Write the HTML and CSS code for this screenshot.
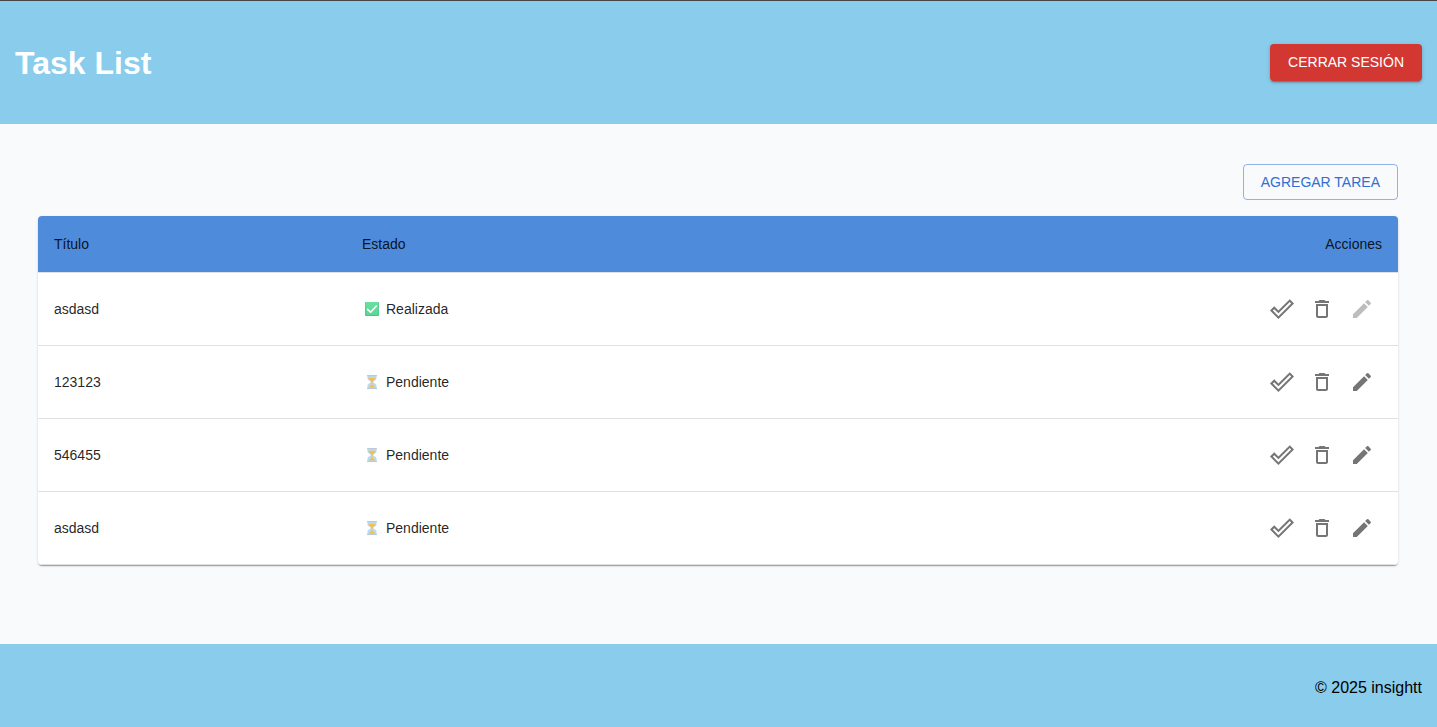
FILE: index.html
```html
<!DOCTYPE html>
<html lang="es">
<head>
  <meta charset="utf-8">
  <meta name="viewport" content="width=device-width, initial-scale=1">
  <title>Task List</title>
  <link rel="stylesheet" href="styles.css">
</head>
<body>
  <svg class="sprite" aria-hidden="true">
    <defs>
      <linearGradient id="green" x1="0" y1="0" x2="0" y2="1"><stop offset="0" stop-color="#6be0a0"/><stop offset="1" stop-color="#5bd695"/></linearGradient>
    </defs>
    <symbol id="done" viewBox="0 0 24 24"><path d="m19.77 5.03 1.4 1.4L8.43 19.17l-5.6-5.6 1.4-1.4 4.2 4.2L19.77 5.03m0-2.83L8.43 13.54l-4.2-4.2L0 13.57 8.43 22 24 6.43 19.77 2.2z"/></symbol>
    <symbol id="trash" viewBox="0 0 24 24"><path d="M16 9v10H8V9h8m-1.5-6h-5l-1 1H5v2h14V4h-3.5l-1-1zM18 7H6v12c0 1.1.9 2 2 2h8c1.1 0 2-.9 2-2V7z"/></symbol>
    <symbol id="edit" viewBox="0 0 24 24"><path d="M3 17.25V21h3.75L17.81 9.94l-3.75-3.75L3 17.25zM20.71 7.04c.39-.39.39-1.02 0-1.41l-2.34-2.34a.9959.9959 0 0 0-1.41 0l-1.83 1.83 3.75 3.75 1.83-1.83z"/></symbol>
    <symbol id="checked" viewBox="0 0 14 14"><rect width="14" height="14" rx="1" fill="#48c483"/><rect width="13" height="13" x=".5" rx="1" fill="url(#green)"/><path d="M2.6 7.3 5.6 10.2 11.4 4" fill="none" stroke="#fff" stroke-width="1.6" stroke-linecap="round" stroke-linejoin="round"/></symbol>
    <symbol id="hourglass" viewBox="0 0 14 14">
      <path d="M2.500 1h9v2.500C11.500 5.300 8.300 6 8.300 7s3.200 1.700 3.200 3.500V13h-9v-2.500C2.500 8.700 5.700 8 5.700 7S2.500 5.300 2.500 3.500z" fill="#b9dcf6"/>
      <path d="M3.300 2.800h7.400C10.500 4.800 7.800 5.600 7.500 7v2.800l3 2.700h-7l3-2.700V7C6.200 5.600 3.500 4.800 3.300 2.800z" fill="#f7bd52"/>
      <path d="M2 0h10v1.300H2zM2 12.700h10V14H2z" fill="#bccad8"/>
    </symbol>
  </svg>

  <header class="header">
    <h1 class="title">Task List</h1>
    <button class="button button-danger" type="button">CERRAR SESIÓN</button>
  </header>

  <main class="main">
    <div class="toolbar">
      <button class="button button-outlined" type="button">AGREGAR TAREA</button>
    </div>
    <div class="card">
      <table class="tasks">
        <thead>
          <tr><th class="col-title" scope="col">Título</th><th scope="col">Estado</th><th class="col-actions" scope="col">Acciones</th></tr>
        </thead>
        <tbody>
          <tr>
            <td>asdasd</td>
            <td><span class="status"><svg class="status-icon" aria-hidden="true"><use href="#checked"/></svg>Realizada</span></td>
            <td><div class="actions">
              <button class="icon-button" type="button" aria-label="Completar"><svg class="icon"><use href="#done"/></svg></button>
              <button class="icon-button" type="button" aria-label="Eliminar"><svg class="icon"><use href="#trash"/></svg></button>
              <button class="icon-button" type="button" aria-label="Editar" disabled><svg class="icon"><use href="#edit"/></svg></button>
            </div></td>
          </tr>
          <tr>
            <td>123123</td>
            <td><span class="status"><svg class="status-icon" aria-hidden="true"><use href="#hourglass"/></svg>Pendiente</span></td>
            <td><div class="actions">
              <button class="icon-button" type="button" aria-label="Completar"><svg class="icon"><use href="#done"/></svg></button>
              <button class="icon-button" type="button" aria-label="Eliminar"><svg class="icon"><use href="#trash"/></svg></button>
              <button class="icon-button" type="button" aria-label="Editar"><svg class="icon"><use href="#edit"/></svg></button>
            </div></td>
          </tr>
          <tr>
            <td>546455</td>
            <td><span class="status"><svg class="status-icon" aria-hidden="true"><use href="#hourglass"/></svg>Pendiente</span></td>
            <td><div class="actions">
              <button class="icon-button" type="button" aria-label="Completar"><svg class="icon"><use href="#done"/></svg></button>
              <button class="icon-button" type="button" aria-label="Eliminar"><svg class="icon"><use href="#trash"/></svg></button>
              <button class="icon-button" type="button" aria-label="Editar"><svg class="icon"><use href="#edit"/></svg></button>
            </div></td>
          </tr>
          <tr>
            <td>asdasd</td>
            <td><span class="status"><svg class="status-icon" aria-hidden="true"><use href="#hourglass"/></svg>Pendiente</span></td>
            <td><div class="actions">
              <button class="icon-button" type="button" aria-label="Completar"><svg class="icon"><use href="#done"/></svg></button>
              <button class="icon-button" type="button" aria-label="Eliminar"><svg class="icon"><use href="#trash"/></svg></button>
              <button class="icon-button" type="button" aria-label="Editar"><svg class="icon"><use href="#edit"/></svg></button>
            </div></td>
          </tr>
        </tbody>
      </table>
    </div>
  </main>

  <footer class="footer"><p class="copyright">© 2025 insightt</p></footer>
</body>
</html>
```

FILE: styles.css
```css
* {
  box-sizing: border-box;
}

body {
  display: flex;
  flex-direction: column;
  min-height: 100vh;
  margin: 0;
  background: #f8fafc;
  color: #000;
  font-family: "Liberation Sans", Arial, sans-serif;
  font-size: 16px;
}

.sprite {
  position: absolute;
  width: 0;
  height: 0;
}

.header {
  display: flex;
  align-items: center;
  justify-content: space-between;
  padding: 43px 15px;
  border-top: 1px solid #474747;
  background: #8acceb;
}

.title {
  margin: 0;
  color: #fff;
  font-size: 32px;
  line-height: 36px;
}

.button {
  border: 1px solid transparent;
  border-radius: 4px;
  font-family: inherit;
  font-size: 14px;
  cursor: pointer;
}

.button-danger {
  padding: 5px 17px 6px;
  background: #d33732;
  color: #fff;
  line-height: 24px;
  box-shadow: 0 3px 1px -2px rgba(0, 0, 0, 0.2), 0 2px 2px rgba(0, 0, 0, 0.14), 0 1px 5px rgba(0, 0, 0, 0.12);
}

.button-outlined {
  padding: 5px 17px;
  border-color: #90b3e4;
  background: transparent;
  color: #326fd1;
  line-height: 24px;
}

.main {
  flex: 1;
  padding: 40px 39px 40px 38px;
}

.toolbar {
  display: flex;
  justify-content: flex-end;
  margin-bottom: 16px;
}

.card {
  overflow: hidden;
  border-radius: 4px;
  background: #fff;
  box-shadow: 0 2px 1px -1px rgba(0, 0, 0, 0.2), 0 1px 1px rgba(0, 0, 0, 0.14), 0 1px 3px rgba(0, 0, 0, 0.12);
}

.tasks {
  width: 100%;
  border-spacing: 0;
  color: rgba(0, 0, 0, 0.87);
  font-size: 14px;
  line-height: 24px;
}

.tasks th,
.tasks td {
  padding: 16px;
  border-bottom: 1px solid #e0e0e0;
  font-weight: 400;
  text-align: left;
}

.tasks th {
  background: #4e8cdb;
}

.tasks .col-title {
  width: 308px;
}

.tasks .col-actions {
  text-align: right;
}

.status {
  display: flex;
  align-items: center;
  gap: 7px;
  padding-left: 3px;
}

.status-icon {
  width: 14px;
  height: 14px;
}

.actions {
  display: flex;
  justify-content: flex-end;
}

.icon-button {
  display: flex;
  padding: 8px;
  border: 0;
  border-radius: 50%;
  background: transparent;
  color: #757575;
  cursor: pointer;
}

.icon-button:disabled {
  color: #bdbdbd;
  cursor: default;
}

.icon {
  width: 24px;
  height: 24px;
  fill: currentColor;
}

.footer {
  padding: 35px 15px 30px;
  background: #8acceb;
  text-align: right;
}

.copyright {
  margin: 0;
  line-height: 18px;
}
```
